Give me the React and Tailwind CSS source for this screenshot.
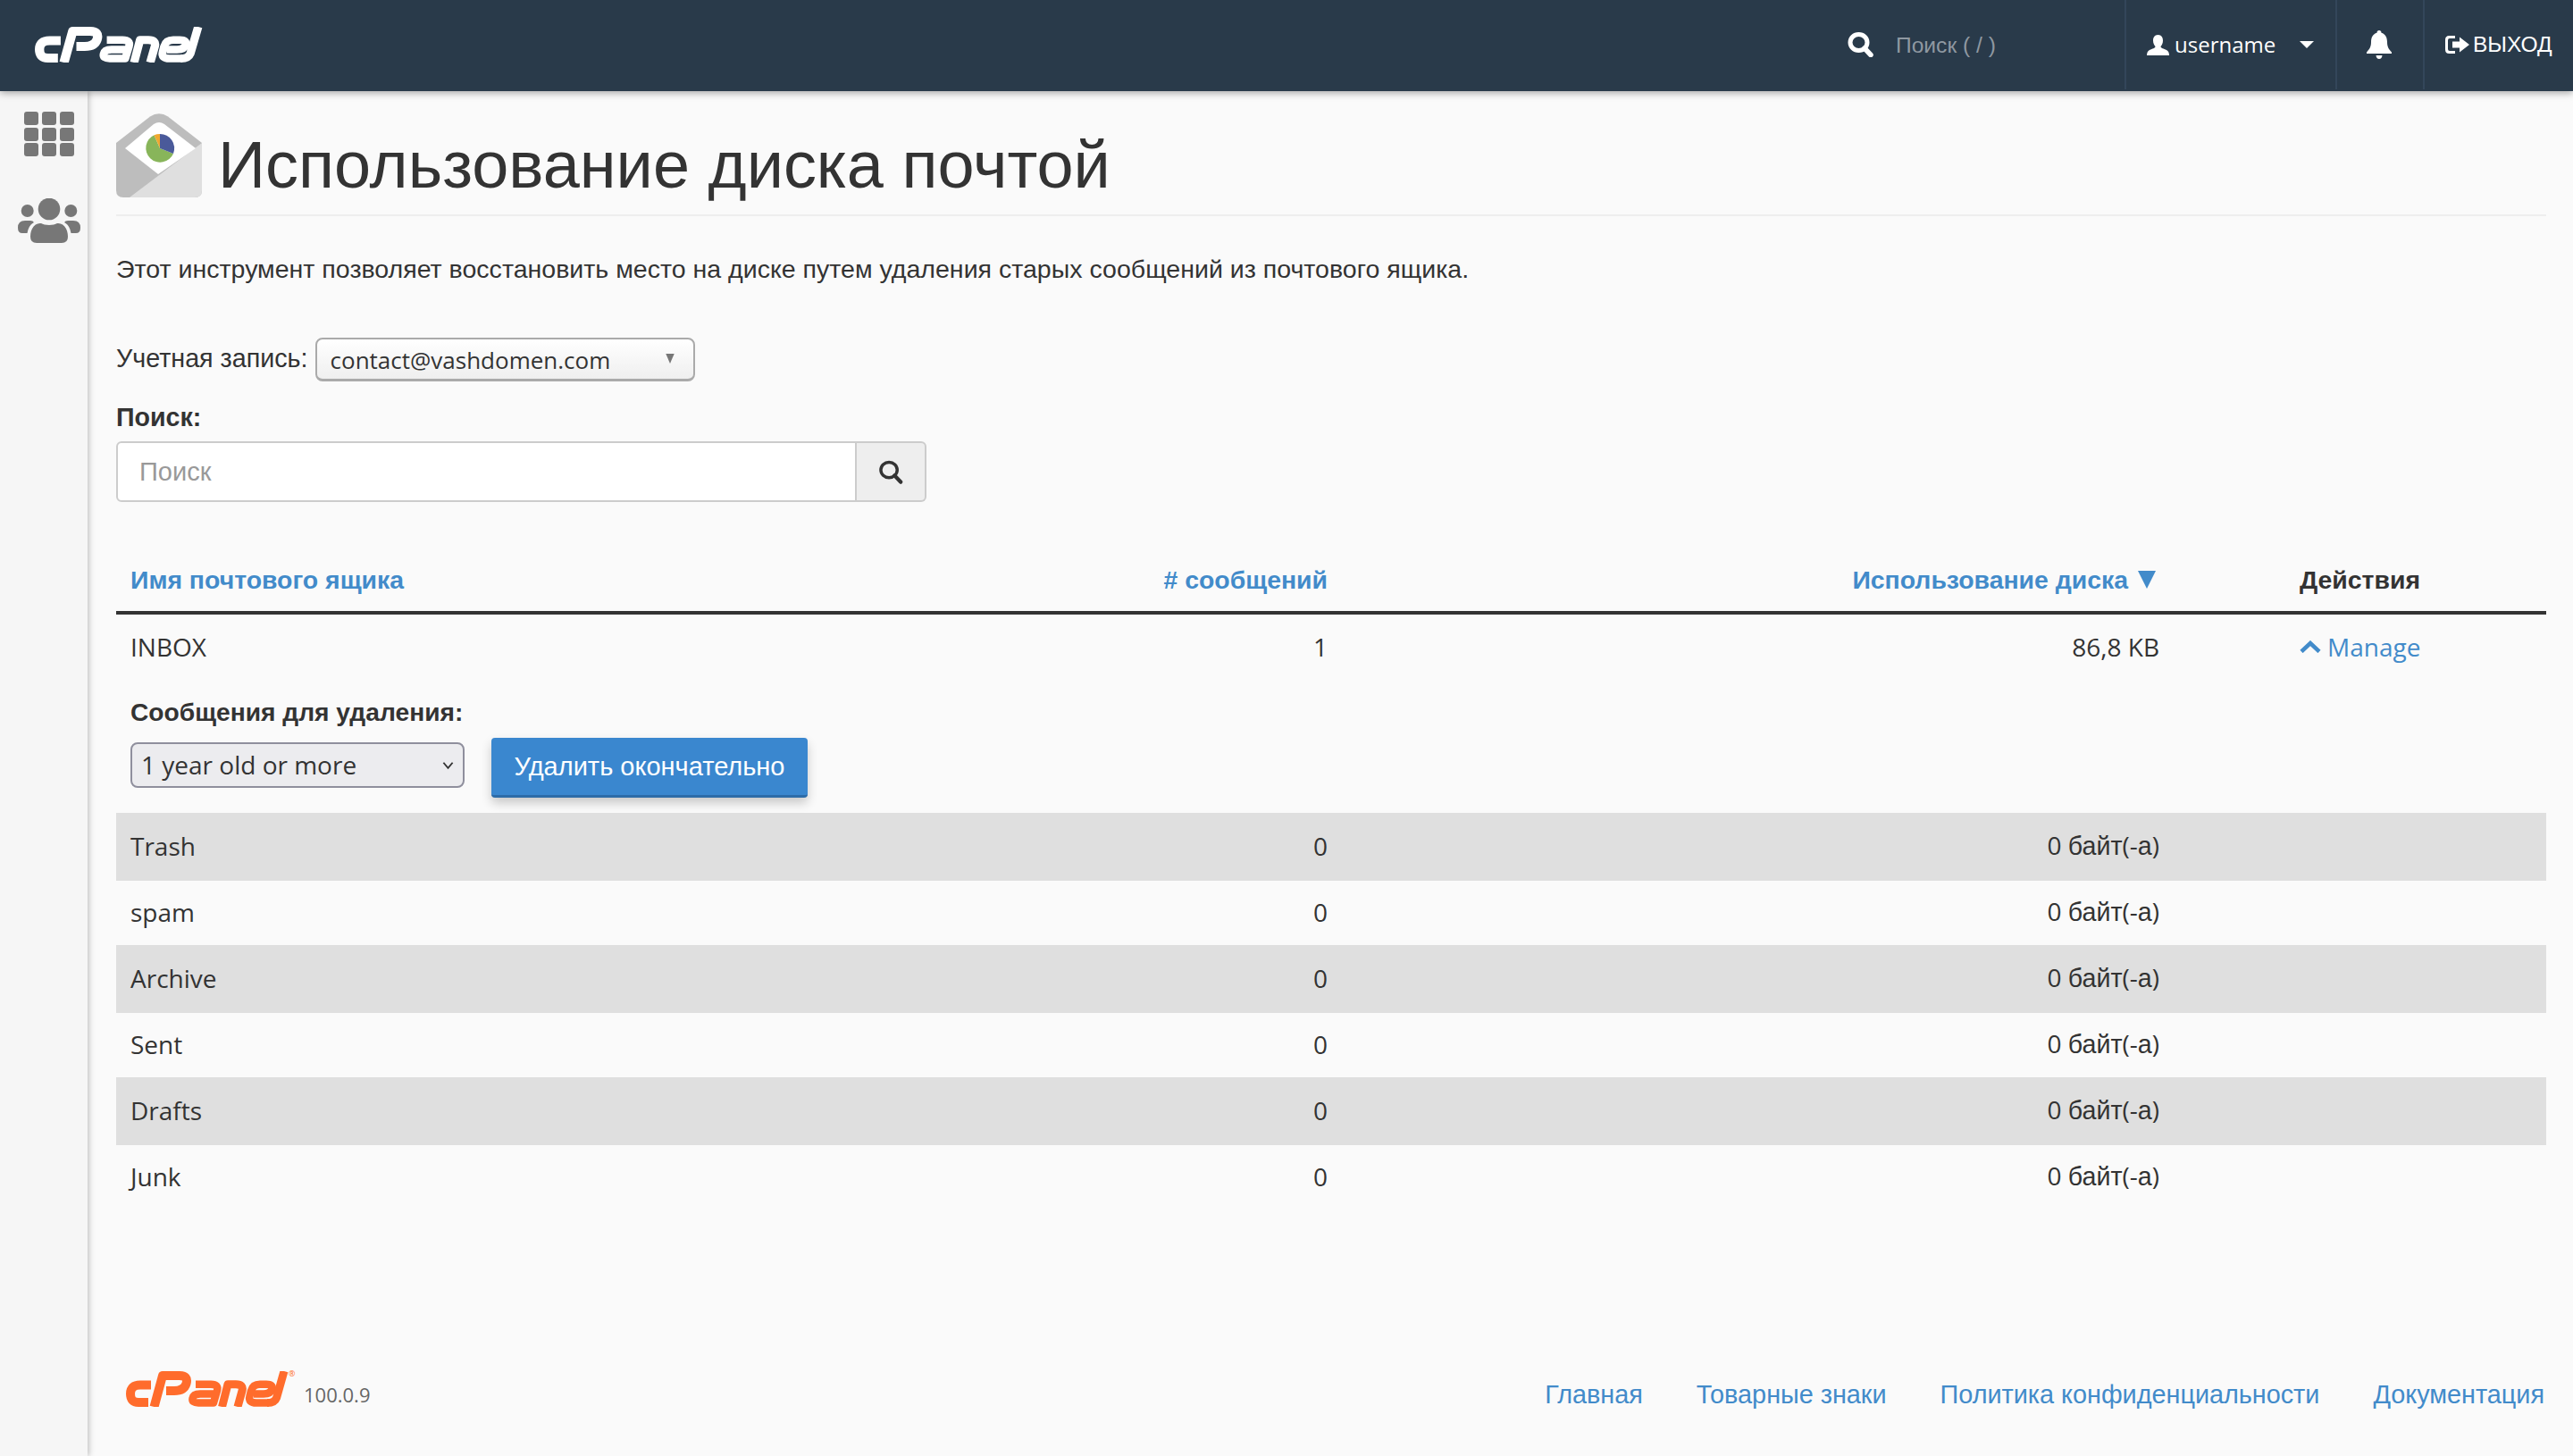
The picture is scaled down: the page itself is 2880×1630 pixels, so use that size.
import React from "react";

const L = "font-['Liberation_Sans',Arial,sans-serif]";
const O = "font-['Open_Sans',sans-serif]";

function Logo({ className }) {
  return (
    <svg viewBox="0 0 182 40" preserveAspectRatio="none" className={className} fill="none" stroke="currentColor" strokeLinejoin="round" strokeLinecap="butt">
      <path d="M28 15.5 H16 Q5 15.5 5 25.3 Q5 35 14 35 H25" strokeWidth="10" />
      <path d="M31.5 40 L41 5 H60 Q70 5 67.5 14 Q65 22 54 22 H45" strokeWidth="10" />
      <path d="M78 14.7 H95 Q104 14.7 102 22 L98 35.5 H81 Q73.5 35.5 74.5 30.5 Q75.5 25.5 83 25.5 H100" strokeWidth="8.5" />
      <path d="M107.5 40 L114 14.7 H123 Q132 14.7 130 22 L125 40" strokeWidth="9" />
      <path d="M160 35.5 H146 Q136.5 35.5 138.5 28 L140 22 Q142 14.7 150 14.7 H157 Q165 14.7 163.5 20 Q162 25.5 154 25.5 H143" strokeWidth="8.5" />
      <path d="M177 0 L168.5 30 Q166.5 35.5 158 35.5" strokeWidth="9" />
    </svg>
  );
}

function SearchIcon({ className, ring = 5, handle = 5.5 }) {
  return (
    <svg viewBox="0 0 30 28" className={className} fill="none" stroke="currentColor">
      <ellipse cx="12.5" cy="11.5" rx="9.5" ry="9" strokeWidth={ring} />
      <path d="M19 18 L26 25.5" strokeWidth={handle} strokeLinecap="round" />
    </svg>
  );
}

function Envelope() {
  return (
    <svg viewBox="0 0 96 94" className="h-[94px] w-[96px] shrink-0">
      <path d="M0 33 L38 3.5 Q48 -3 58 3.5 L96 33 V86 Q96 94 88 94 H8 Q0 94 0 86 Z" fill="#bdbdbd" />
      <path d="M96 33 L15 94 H88 Q96 94 96 86 Z" fill="#dfdfdf" />
      <path d="M10 39 L42 12 Q48 8 54 12 L89 39 L47 68 Z" fill="#ffffff" />
      <path d="M49 39 L42.5 24.2 A16 16 0 1 0 64 45 Z" fill="#88b55a" />
      <path d="M49 39 L49 23 A16 16 0 0 1 64 45 Z" fill="#4a5a9a" />
      <path d="M49 39 L42.5 24.2 A16 16 0 0 1 49 23 Z" fill="#f0a830" />
    </svg>
  );
}

function GridIcon() {
  const xs = [0, 20, 40];
  const ys = [0, 18, 35];
  return (
    <svg viewBox="0 0 56 50" className="h-[50px] w-[56px]" fill="#777777">
      {ys.map((y) =>
        xs.map((x) => <rect key={x + "-" + y} x={x} y={y} width="16" height="15" rx="3" />)
      )}
    </svg>
  );
}

function UsersIcon() {
  return (
    <svg viewBox="0 0 70 50" className="h-[50px] w-[70px]" fill="#777777">
      <circle cx="35" cy="12" r="12.3" />
      <circle cx="10.7" cy="14" r="7" />
      <circle cx="59.3" cy="14" r="7" />
      <path d="M14 43 C14 33 20 27 26 28 C30 30.5 40 30.5 44 28 C50 27 56 33 56 43 Q56 50 49 50 H21 Q14 50 14 43 Z" />
      <path d="M0 33 Q0 25 8 25 H14 Q17 25 18 27 Q12 30 10.5 39 H5 Q0 39 0 33 Z" />
      <path d="M70 33 Q70 25 62 25 H56 Q53 25 52 27 Q58 30 59.5 39 H65 Q70 39 70 33 Z" />
    </svg>
  );
}

function UserIcon() {
  return (
    <svg viewBox="0 0 25 23" className="h-[23px] w-[25px]" fill="#ffffff">
      <path d="M12.5 0 C16.5 0 18 3 18 6.5 C18 9.5 16.5 12 15.5 13 C15.5 15 19 15.5 22 17 C24 18 25 20 25 23 H0 C0 20 1 18 3 17 C6 15.5 9.5 15 9.5 13 C8.5 12 7 9.5 7 6.5 C7 3 8.5 0 12.5 0 Z" />
    </svg>
  );
}

function Bell() {
  return (
    <svg viewBox="0 0 28 32" className="h-[32px] w-[28px]" fill="#ffffff">
      <path d="M14 0 C15.5 0 16.5 1 16.5 2.8 C21 4 23 8 23 13 C23 19 25 21 28 24.5 V26 H0 V24.5 C3 21 5 19 5 13 C5 8 7 4 11.5 2.8 C11.5 1 12.5 0 14 0 Z" />
      <path d="M10.5 28 H17.5 Q17 32 14 32 Q11 32 10.5 28 Z" />
    </svg>
  );
}

function LogoutIcon() {
  return (
    <svg viewBox="0 0 27 20" className="h-[20px] w-[27px]" fill="#ffffff">
      <path d="M4.5 0 H11 V3 H5 Q3 3 3 5 V15 Q3 17 5 17 H11 V20 H4.5 Q0 20 0 15.5 V4.5 Q0 0 4.5 0 Z" />
      <path d="M8 6.5 H16 V1.5 L27 10 L16 18.5 V13.5 H8 Z" />
    </svg>
  );
}

function Bytes() {
  return (
    <span>
      <span className={O}>0 </span>
      <span className={`${L} text-[28.6px]`}>байт</span>
      <span className={O}>(-</span>
      <span className={`${L} text-[28.6px]`}>а</span>
      <span className={O}>)</span>
    </span>
  );
}

const COLS = "grid grid-cols-[760px_612px_931px_417px] items-center";

function Row({ name, grey }) {
  return (
    <div className={`${COLS} ${grey ? "h-[76px] bg-[#dfdfdf]" : "h-[72px]"} pb-[2px] text-[28px] text-[#333333] ${O}`}>
      <div className="pl-4">{name}</div>
      <div className="pr-4 text-right">0</div>
      <div className="pr-4 text-right"><Bytes /></div>
      <div />
    </div>
  );
}

export default function App() {
  return (
    <div className="flex h-[1630px] w-full flex-col overflow-hidden bg-[#fafafa] text-[#333333]">
      <header className="relative z-10 flex h-[102px] shrink-0 items-start bg-[#293a4a] text-white shadow-[0_2px_8px_rgba(0,0,0,0.35)]">
        <div className="ml-[39px] mt-[30px]">
          <Logo className="h-[40px] w-[188px] text-white" />
        </div>
        <div className="ml-auto flex h-[100px] items-stretch">
          <div className="flex w-[310px] items-center">
            <SearchIcon className="h-[28px] w-[30px] text-white" />
            <span className={`ml-[24px] pt-[2px] text-[24.6px] text-[#8f98a1] ${L}`}>Поиск ( / )</span>
          </div>
          <div className={`flex w-[236px] items-center border-l-2 border-[#33465a] pl-[23px] text-[24px] ${O}`}>
            <UserIcon />
            <span className="ml-[6px]">username</span>
            <svg viewBox="0 0 16 8" className="ml-[27px] h-[8px] w-[16px]" fill="#ffffff"><path d="M0 0 H16 L8 8 Z" /></svg>
          </div>
          <div className="flex w-[98px] items-center border-l-2 border-[#33465a] pl-[33px]">
            <Bell />
          </div>
          <div className={`flex w-[168px] items-center border-l-2 border-[#33465a] pl-[23px] text-[24.5px] ${L}`}>
            <LogoutIcon />
            <span className="ml-[4px]">ВЫХОД</span>
          </div>
        </div>
      </header>

      <div className="flex min-h-0 flex-1">
        <aside className="relative flex w-[98px] shrink-0 flex-col items-center bg-[#f6f6f6] pl-[12px] pt-[23px] shadow-[2px_0_6px_rgba(0,0,0,0.22)]">
          <GridIcon />
          <div className="mt-[47px]"><UsersIcon /></div>
        </aside>

        <main className="flex min-w-0 flex-1 flex-col pl-[32px] pr-[30px] pt-[25px]">
          <div className="flex h-[93px] items-center">
            <Envelope />
            <h1 className={`ml-[18px] pt-[22px] text-[73.9px] font-normal leading-none ${L}`}>Использование диска почтой</h1>
          </div>
          <div className="mt-[20px] h-[2px] bg-[#eeeeee]" />
          <p className={`mt-[39px] text-[28.55px] leading-[40px] ${L}`}>
            Этот инструмент позволяет восстановить место на диске путем удаления старых сообщений из почтового ящика.
          </p>

          <div className="mt-[57px] flex h-[49px] items-center">
            <span className={`pb-[2px] text-[28.7px] ${L}`}>Учетная запись:</span>
            <div className="relative ml-[8px]">
              <select defaultValue="a" className={`block h-[49px] w-[425px] appearance-none rounded-[8px] border-2 border-[#aaaaaa] border-b-[3px] bg-gradient-to-b from-[#ffffff] to-[#efefef] pl-[15px] pt-[2px] text-[26px] text-[#333333] ${O}`}>
                <option value="a">contact@vashdomen.com</option>
              </select>
              <svg viewBox="0 0 12 14" className="absolute left-[391px] top-[18px] h-[11px] w-[12px]" fill="#777777"><path d="M0 0 H12 L6 14 Z" /></svg>
            </div>
          </div>

          <label className={`mt-[20px] text-[28.6px] font-bold leading-[40px] ${L}`}>Поиск:</label>
          <div className="mt-[7px] flex h-[68px] w-[907px]">
            <input placeholder="Поиск" className={`min-w-0 flex-1 rounded-l-[6px] border-2 border-[#cccccc] bg-white pl-[24px] pt-[2px] text-[29px] outline-none placeholder:text-[#999999] ${L}`} />
            <div className="flex w-[78px] items-center justify-center rounded-r-[6px] border-2 border-l-0 border-[#cccccc] bg-[#eeeeee]">
              <SearchIcon className="h-[27px] w-[29px] text-[#333333]" ring={3.6} handle={4.5} />
            </div>
          </div>

          <div className={`${COLS} mt-[54px] h-[68px] pb-[2px] text-[28.4px] font-bold ${L}`}>
            <div className="pl-4 text-[#428bca]">Имя почтового ящика</div>
            <div className="pr-4 text-right text-[#428bca]"># сообщений</div>
            <div className="flex items-center justify-end pr-[20px] text-[#428bca]">
              <span>Использование диска</span>
              <svg viewBox="0 0 20 20" className="ml-[11px] h-[20px] w-[20px]" fill="#428bca"><path d="M0 0 H20 L10 20 Z" /></svg>
            </div>
            <div className="pl-[141px]">Действия</div>
          </div>
          <div className="h-[4px] bg-[#333333]" />

          <div className={`${COLS} h-[74px] pb-[3px] text-[28px] ${O}`}>
            <div className="pl-4">INBOX</div>
            <div className="pr-4 text-right">1</div>
            <div className="pr-4 text-right">86,8 KB</div>
            <div className="flex items-center pl-[141px] text-[#428bca]">
              <svg viewBox="0 0 24 14" className="h-[14px] w-[24px]" fill="none" stroke="#428bca" strokeWidth="4.5"><path d="M2 12.5 L12 3 L22 12.5" /></svg>
              <span className="ml-[7px]">Manage</span>
            </div>
          </div>

          <div className="pl-4">
            <div className={`mt-[15px] text-[28.2px] font-bold leading-[40px] ${L}`}>Сообщения для удаления:</div>
            <div className="mt-[9px] flex h-[67px] items-center">
              <div className="relative mb-[6px]">
                <select defaultValue="1" className={`block h-[51px] w-[374px] appearance-none rounded-[8px] border-2 border-[#8f8f9d] bg-[#ececef] pb-[2px] pl-[10px] text-[28px] text-[#333333] ${O}`}>
                  <option value="1">1 year old or more</option>
                </select>
                <svg viewBox="0 0 14 10" className="absolute left-[349px] top-[21px] h-[10px] w-[13px]" fill="none" stroke="#333333" strokeWidth="2"><path d="M1.5 1.5 L7 8 L12.5 1.5" /></svg>
              </div>
              <button className={`ml-[30px] h-[67px] w-[354px] rounded-[4px] border-b-[3px] border-[#2d6ca8] bg-[#3a87cf] pt-[2px] text-[29px] text-white shadow-[0_6px_12px_rgba(0,0,0,0.2)] ${L}`}>
                Удалить окончательно
              </button>
            </div>
          </div>

          <div className="mt-[17px]">
            <Row name="Trash" grey />
            <Row name="spam" />
            <Row name="Archive" grey />
            <Row name="Sent" />
            <Row name="Drafts" grey />
            <Row name="Junk" />
          </div>

          <footer className="mb-[41px] mt-auto flex h-[54px] items-center pl-[11px]">
            <div className="relative self-start">
              <Logo className="h-[40px] w-[182px] text-[#ff6c2c]" />
              <span className={`absolute left-[182px] top-[-4px] text-[9px] text-[#ff6c2c] ${O}`}>®</span>
            </div>
            <span className={`ml-[17px] pb-[2px] text-[22px] text-[#666666] ${O}`}>100.0.9</span>
            <nav className={`ml-auto flex gap-[60px] pr-[2px] text-[28.8px] text-[#428bca] ${L}`}>
              <a>Главная</a>
              <a>Товарные знаки</a>
              <a>Политика конфиденциальности</a>
              <a>Документация</a>
            </nav>
          </footer>
        </main>
      </div>
    </div>
  );
}
